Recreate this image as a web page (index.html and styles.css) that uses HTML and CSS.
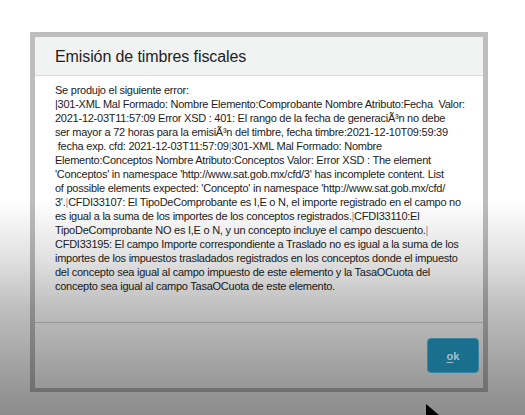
FILE: index.html
```html
<!DOCTYPE html>
<html lang="es">
<head>
    <meta charset="UTF-8">
    <title>Emisión de timbres fiscales</title>
    <link rel="stylesheet" href="styles.css">
</head>
<body>
    <div class="screen">
        <div class="dialog">
            <div class="dialog-header">
                <h1>Emisión de timbres fiscales</h1>
            </div>
            <div class="dialog-body">
                <p>Se produjo el siguiente error:<br>
                |301-XML Mal Formado: Nombre Elemento:Comprobante Nombre Atributo:Fecha&nbsp; Valor:<br>
                2021-12-03T11:57:09 Error XSD : 401: El rango de la fecha de generaciÃ³n no debe<br>
                ser mayor a 72 horas para la emisiÃ³n del timbre, fecha timbre:2021-12-10T09:59:39<br>
                &nbsp;fecha exp. cfd: 2021-12-03T11:57:09<span class="pipe">|</span>301-XML Mal Formado: Nombre<br>
                Elemento:Conceptos Nombre Atributo:Conceptos Valor: Error XSD : The element<br>
                'Conceptos' in namespace 'http://www.sat.gob.mx/cfd/3' has incomplete content. List<br>
                of possible elements expected: 'Concepto' in namespace 'http://www.sat.gob.mx/cfd/<br>
                3'.<span class="pipe">|</span>CFDI33107: El TipoDeComprobante es I,E o N, el importe registrado en el campo no<br>
                es igual a la suma de los importes de los conceptos registrados.<span class="pipe">|</span>CFDI33110:El<br>
                TipoDeComprobante NO es I,E o N, y un concepto incluye el campo descuento.<span class="pipe">|</span><br>
                CFDI33195: El campo Importe correspondiente a Traslado no es igual a la suma de los<br>
                importes de los impuestos trasladados registrados en los conceptos donde el impuesto<br>
                del concepto sea igual al campo impuesto de este elemento y la TasaOCuota del<br>
                concepto sea igual al campo TasaOCuota de este elemento.</p>
            </div>
            <div class="dialog-footer">
                <button class="btn-ok" type="button"><u>o</u>k</button>
            </div>
        </div>
    </div>
    <div class="shade"></div>
    <svg class="cursor" width="14" height="14" viewBox="0 0 14 14">
        <path d="M0 0 L0 14 L3 11 L6 14 L14 14 L11 11 L13 11 Z" fill="#000"/>
    </svg>
</body>
</html>
```

FILE: styles.css
```css
/* General */
body {
    margin: 0;
    height: 415px;
    overflow: hidden;
    background: #fff;
    font-family: 'Liberation Sans', Arial, sans-serif;
    color: #222;
}

.screen {
    padding: 32px 0 0 30px;
}

/* Dialog */
.dialog {
    width: 458px;
    height: 360px;
    box-sizing: border-box;
    border: 5px solid #bdbdbd;
    border-bottom-width: 4px;
    background: #fff;
    display: flex;
    flex-direction: column;
}

.dialog-header {
    height: 39px;
    padding: 1px 20px 0;
    box-sizing: border-box;
    background: #f1f2f2;
    border-bottom: 1px solid #dcdcdc;
}

.dialog-header h1 {
    margin: 0;
    font-size: 16px;
    font-weight: normal;
    line-height: 37px;
    letter-spacing: -0.1px;
    color: #1e1e1e;
}

.dialog-body {
    flex: 1;
    padding: 7px 0 0 20px;
    overflow: hidden;
}

.dialog-body p {
    margin: 0;
    font-size: 11px;
    line-height: 14px;
    letter-spacing: -0.25px;
    white-space: nowrap;
    color: #1c1c1c;
}

.pipe {
    color: #999;
}

.dialog-footer {
    height: 66px;
    box-sizing: border-box;
    border-top: 1px solid #cfcfcf;
    padding: 15px 4px 0 0;
    display: flex;
    justify-content: flex-end;
    align-items: flex-start;
}

.btn-ok {
    position: relative;
    z-index: 2;
    width: 52px;
    height: 35px;
    border: 1px solid #3a86a2;
    border-radius: 4px;
    background: #18708e;
    color: #a3c0cc;
    font-family: 'Liberation Sans', Arial, sans-serif;
    font-size: 11px;
    font-weight: bold;
    padding: 0;
}

.btn-ok u {
    text-decoration-thickness: 1px;
    text-underline-offset: 2px;
}

/* Screen shading over everything */
.shade {
    position: absolute;
    inset: 0;
    z-index: 1;
    pointer-events: none;
    background: linear-gradient(to bottom,
        rgba(0, 0, 0, 0) 0,
        rgba(0, 0, 0, 0) 200px,
        rgba(0, 0, 0, 0.12) 260px,
        rgba(0, 0, 0, 0.26) 310px,
        rgba(0, 0, 0, 0.40) 385px,
        rgba(0, 0, 0, 0.45) 415px);
}

.cursor {
    position: absolute;
    left: 426px;
    top: 404px;
    z-index: 3;
}
```
